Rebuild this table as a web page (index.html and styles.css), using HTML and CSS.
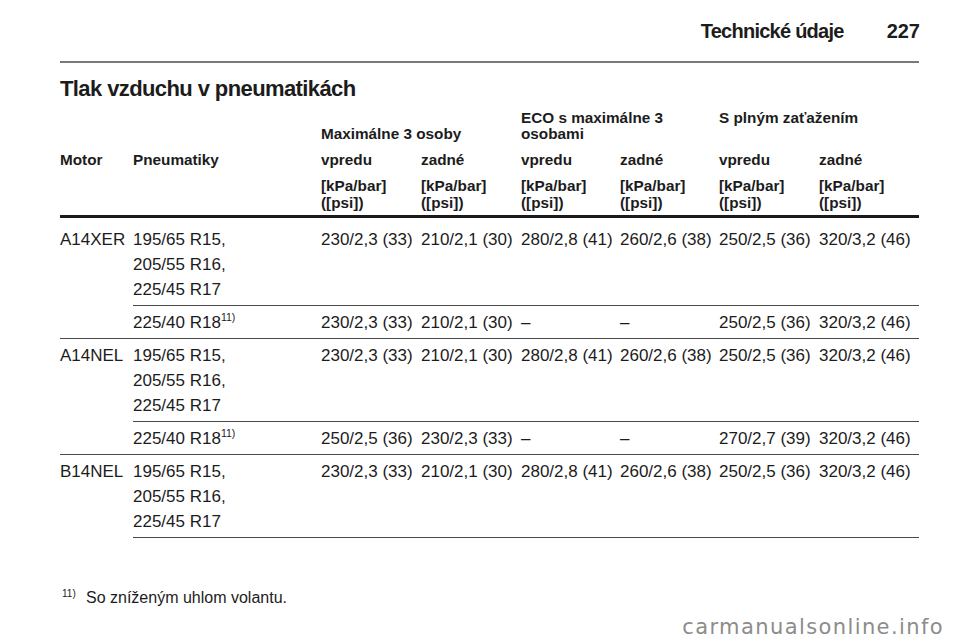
FILE: index.html
```html
<!DOCTYPE html>
<html lang="sk">
<head>
<meta charset="utf-8">
<title>Technické údaje 227</title>
<link rel="stylesheet" href="styles.css">
</head>
<body>
<header class="running-head">
  <span class="running-title">Technické údaje</span>
  <span class="page-no">227</span>
</header>
<div class="head-rule"></div>
<h1 class="title">Tlak vzduchu v pneumatikách</h1>
<table class="tyres">
  <colgroup>
    <col class="c-motor"><col class="c-tyre">
    <col class="c-100"><col class="c-100">
    <col class="c-99"><col class="c-99">
    <col class="c-100"><col class="c-100">
  </colgroup>
  <thead>
    <tr class="h1">
      <th></th><th></th>
      <th colspan="2" class="bottom">Maximálne 3 osoby</th>
      <th colspan="2">ECO s maximálne 3<br>osobami</th>
      <th colspan="2">S plným zaťažením</th>
    </tr>
    <tr class="h2">
      <th>Motor</th><th>Pneumatiky</th>
      <th>vpredu</th><th>zadné</th>
      <th>vpredu</th><th>zadné</th>
      <th>vpredu</th><th>zadné</th>
    </tr>
    <tr class="h3">
      <th></th><th></th>
      <th>[kPa/bar]<br>([psi])</th><th>[kPa/bar]<br>([psi])</th>
      <th>[kPa/bar]<br>([psi])</th><th>[kPa/bar]<br>([psi])</th>
      <th>[kPa/bar]<br>([psi])</th><th>[kPa/bar]<br>([psi])</th>
    </tr>
  </thead>
  <tbody>
    <tr class="first">
      <td rowspan="2" class="motor">A14XER</td>
      <td class="line">195/65 R15,<br>205/55 R16,<br>225/45 R17</td>
      <td class="line">230/2,3 (33)</td><td class="line">210/2,1 (30)</td>
      <td class="line">280/2,8 (41)</td><td class="line">260/2,6 (38)</td>
      <td class="line">250/2,5 (36)</td><td class="line">320/3,2 (46)</td>
    </tr>
    <tr>
      <td class="line">225/40 R18<sup>11)</sup></td>
      <td class="line">230/2,3 (33)</td><td class="line">210/2,1 (30)</td>
      <td class="line">–</td><td class="line">–</td>
      <td class="line">250/2,5 (36)</td><td class="line">320/3,2 (46)</td>
    </tr>
    <tr>
      <td rowspan="2" class="motor">A14NEL</td>
      <td class="line">195/65 R15,<br>205/55 R16,<br>225/45 R17</td>
      <td class="line">230/2,3 (33)</td><td class="line">210/2,1 (30)</td>
      <td class="line">280/2,8 (41)</td><td class="line">260/2,6 (38)</td>
      <td class="line">250/2,5 (36)</td><td class="line">320/3,2 (46)</td>
    </tr>
    <tr>
      <td class="line">225/40 R18<sup>11)</sup></td>
      <td class="line">250/2,5 (36)</td><td class="line">230/2,3 (33)</td>
      <td class="line">–</td><td class="line">–</td>
      <td class="line">270/2,7 (39)</td><td class="line">320/3,2 (46)</td>
    </tr>
    <tr>
      <td class="motor-last">B14NEL</td>
      <td class="line">195/65 R15,<br>205/55 R16,<br>225/45 R17</td>
      <td class="line">230/2,3 (33)</td><td class="line">210/2,1 (30)</td>
      <td class="line">280/2,8 (41)</td><td class="line">260/2,6 (38)</td>
      <td class="line">250/2,5 (36)</td><td class="line">320/3,2 (46)</td>
    </tr>
  </tbody>
</table>
<p class="footnote"><span class="fn-mark">11)</span><span class="fn-text">So zníženým uhlom volantu.</span></p>
<div class="watermark">carmanualsonline.info</div>
</body>
</html>
```
FILE: styles.css
```css
html, body {
  margin: 0;
  padding: 0;
  background: #ffffff;
}
body {
  font-family: "Liberation Sans", Arial, sans-serif;
  color: #1c1c1c;
  width: 960px;
  height: 642px;
  overflow: hidden;
}
.running-head {
  display: flex;
  justify-content: flex-end;
  align-items: baseline;
  gap: 43px;
  padding: 19px 40px 0 0;
  font-weight: bold;
  font-size: 20px;
  line-height: 24px;
}
.running-title {
  letter-spacing: -0.75px;
}
.head-rule {
  margin: 18px 0 0 60px;
  width: 859px;
  height: 2px;
  background: #7a7a7a;
}
.title {
  margin: 13px 0 0 60px;
  font-size: 22px;
  line-height: 26px;
  font-weight: bold;
  letter-spacing: -0.6px;
}
.tyres {
  margin: 8px 0 0 60px;
  width: 859px;
  table-layout: fixed;
  border-collapse: separate;
  border-spacing: 0;
}
.c-motor { width: 73px; }
.c-tyre { width: 188px; }
.c-100 { width: 100px; }
.c-99 { width: 99px; }
.tyres th {
  padding: 0;
  text-align: left;
  font-weight: bold;
  font-size: 15.3px;
  line-height: 16px;
  vertical-align: top;
  white-space: nowrap;
}
.tyres th.bottom {
  vertical-align: bottom;
}
.h2 th {
  padding-top: 10px;
}
.h3 th {
  padding-top: 9px;
  padding-bottom: 4px;
  line-height: 17px;
  border-bottom: 3px solid #1a1a1a;
}
.tyres td {
  padding: 4px 0 3px 0;
  font-size: 17px;
  line-height: 25px;
  vertical-align: top;
  white-space: nowrap;
}
.tyres tr.first td {
  padding-top: 9px;
}
.tyres td.line,
.tyres td.motor {
  border-bottom: 1px solid #4a4a4a;
}
.tyres sup {
  font-size: 10.5px;
  line-height: 0;
  vertical-align: 7px;
}
.footnote {
  margin: 50px 0 0 60px;
  display: flex;
  align-items: baseline;
  font-size: 16px;
  line-height: 20px;
}
.fn-mark {
  width: 26px;
  padding-left: 2px;
  box-sizing: border-box;
  font-size: 10px;
  position: relative;
  top: -6px;
}
.watermark {
  position: absolute;
  right: 16px;
  bottom: 5px;
  font-family: "DejaVu Sans", sans-serif;
  font-size: 21px;
  line-height: 20px;
  letter-spacing: 1.4px;
  color: #8c8c8c;
}
```
